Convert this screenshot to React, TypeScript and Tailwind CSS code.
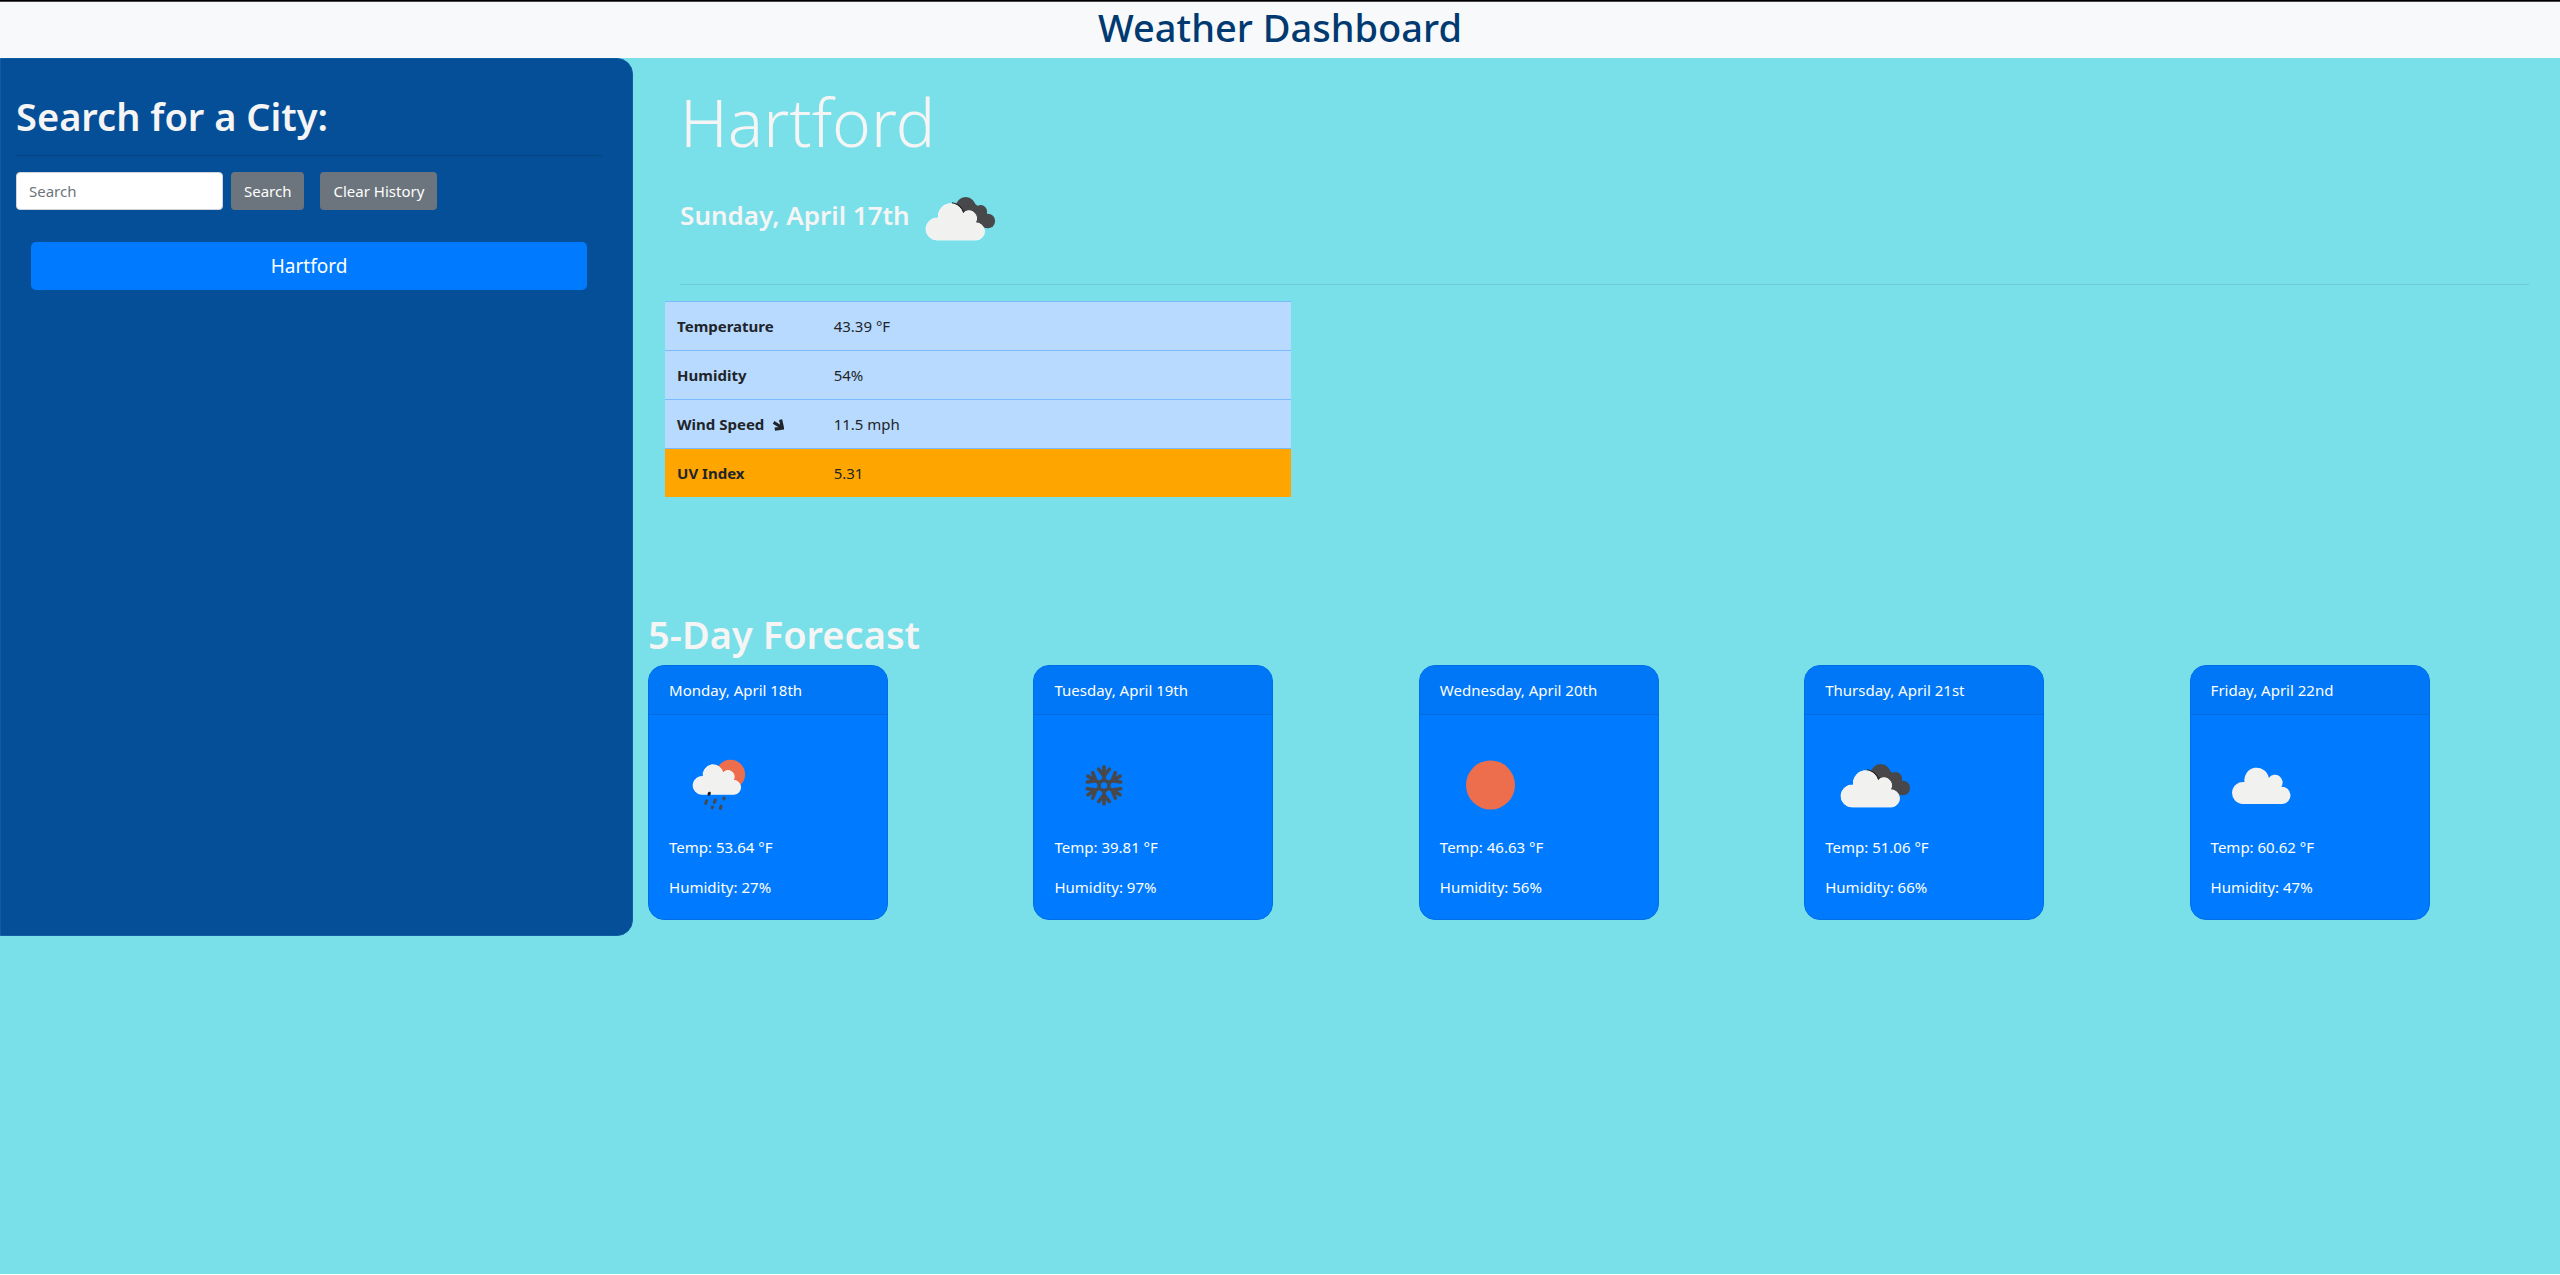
import type { ReactNode } from "react";

type IconKind = "broken" | "rain" | "snow" | "clear" | "few";

const LIGHT = "#f1f1f0";
const DARK = "#48484a";
const SUN = "#ec6e4c";

function CloudShape() {
  return (
    <path d="M32 69A11 11 0 1 1 33.5 47.1A12.3 12.3 0 1 1 57.8 42.9A7.5 7.5 0 0 1 70.2 51.8A8.6 8.6 0 1 1 71.5 69Z" />
  );
}

function WeatherIcon({ kind, label }: { kind: IconKind; label: string }) {
  const drawings: Record<IconKind, ReactNode> = {
    few: (
      <g fill={LIGHT}>
        <CloudShape />
      </g>
    ),
    clear: <circle cx="50.5" cy="50" r="24.5" fill={SUN} />,
    broken: (
      <>
        <g fill={DARK}>
          <circle cx="55.7" cy="39" r="10" />
          <circle cx="70.7" cy="43.5" r="6.4" />
          <circle cx="77.8" cy="53" r="7.3" />
          <path d="M50 40L64 35L77 45L78 60.3L68 58L52 46Z" />
        </g>
        <clipPath id={"dark-" + label}>
          <path d="M47 30H60V52H75V60.5H60V52H47Z" />
        </clipPath>
        <g transform="translate(-5 3)">
          <g
            fill="#252527"
            stroke="#252527"
            strokeWidth="3"
            clipPath={"url(#dark-" + label + ")"}
          >
            <CloudShape />
          </g>
          <g fill="#fff" stroke="#fff" strokeWidth="0.8">
            <CloudShape />
          </g>
          <g fill={LIGHT}>
            <CloudShape />
          </g>
        </g>
      </>
    ),
    rain: (
      <>
        <circle cx="61.5" cy="39.3" r="14.6" fill={SUN} />
        <g transform="translate(6.9 3.1) scale(.815)">
          <g fill="#fff" stroke="#fff" strokeWidth="0.8">
            <CloudShape />
          </g>
          <g fill={LIGHT}>
            <CloudShape />
          </g>
        </g>
        <g stroke={DARK} strokeWidth="3" strokeLinecap="round">
          <path stroke="#1f1f21" d="M40.4 58.2L40 59.3" />
          <path d="M37.5 66L36.7 68.4" />
          <path d="M46.3 65L45.4 67.4" />
          <path d="M55.2 63L54.8 63.9" />
          <path d="M43.5 72L43.2 72.7" />
          <path d="M52.1 71.2L51.3 73.5" />
        </g>
      </>
    ),
    snow: (
      <g
        transform="translate(50 50.4)"
        fill="none"
        stroke={DARK}
        strokeWidth="3.6"
        strokeLinecap="round"
        strokeLinejoin="round"
      >
        <path d="M0 -5.6L4.8 -2.8V2.8L0 5.6L-4.8 2.8V-2.8Z" />
        {[0, 60, 120, 180, 240, 300].map((angle) => (
          <path
            key={angle}
            transform={"rotate(" + angle + ")"}
            d="M0 -5.6V-18.6M-5.4 -16.2L0 -9.4L5.4 -16.2"
          />
        ))}
      </g>
    ),
  };
  return (
    <svg viewBox="0 0 100 100" className="size-25 shrink-0" role="img" aria-label={label}>
      {drawings[kind]}
    </svg>
  );
}

function WindArrow() {
  return (
    <svg viewBox="0 0 12 13" className="ml-2 inline-block h-[13px] w-3 align-[-1px]" aria-hidden="true">
      <path
        d="M1.6 4.4L9 9M8.6 1.6L10.5 10L2.8 11.2"
        fill="none"
        stroke="#212529"
        strokeWidth="3.2"
      />
    </svg>
  );
}

const conditions = [
  { name: "Temperature", value: "43.39 °F", row: "border-[#7abaff] bg-[#b8daff]" },
  { name: "Humidity", value: "54%", row: "border-[#7abaff] bg-[#b8daff]" },
  { name: "Wind Speed", value: "11.5 mph", row: "border-[#7abaff] bg-[#b8daff]" },
  { name: "UV Index", value: "5.31", row: "border-[#7abaff] bg-[#ffa500]" },
];

const forecast: { day: string; kind: IconKind; label: string; temp: string; humidity: string }[] = [
  { day: "Monday, April 18th", kind: "rain", label: "rain", temp: "53.64", humidity: "27" },
  { day: "Tuesday, April 19th", kind: "snow", label: "snow", temp: "39.81", humidity: "97" },
  { day: "Wednesday, April 20th", kind: "clear", label: "clear", temp: "46.63", humidity: "56" },
  { day: "Thursday, April 21st", kind: "broken", label: "cloudy", temp: "51.06", humidity: "66" },
  { day: "Friday, April 22nd", kind: "few", label: "clouds", temp: "60.62", humidity: "47" },
];

function Sidebar() {
  return (
    <aside className="w-[24.73%] shrink-0 rounded-r-2xl border border-[#0f5ca1] bg-[#044f97] pt-8 pr-[30px] pl-[15px]">
      <h2 className="text-[38px] leading-[50px] font-semibold text-[#f5f5f5]">Search for a City:</h2>
      <hr className="mt-3.5 mb-4 border-[#04457f]" />
      <form className="flex" onSubmit={(event) => event.preventDefault()}>
        <input
          type="search"
          aria-label="Search"
          placeholder="Search"
          className="mr-2 h-[38px] w-[207px] rounded border border-[#ced4da] bg-white px-3 text-[#495057] placeholder:text-[#6c757d]"
        />
        <button type="submit" className="mr-4 h-[38px] rounded bg-[#6c757d] px-[13px] text-white">
          Search
        </button>
        <button type="button" className="h-[38px] rounded bg-[#6c757d] px-[13px] text-white">
          Clear History
        </button>
      </form>
      <div className="px-[15px] pt-8">
        <button type="button" className="h-12 w-full rounded-[5px] bg-[#007bff] text-[19px] text-white">
          Hartford
        </button>
      </div>
    </aside>
  );
}

function Current() {
  return (
    <section className="pr-4 pl-8">
      <div className="px-[15px] pt-5 text-[#f5f5f5]">
        <h2 className="mb-1 text-[66px] leading-[86px] font-light">Hartford</h2>
        <div className="flex items-center">
          <h3 className="pb-1.5 text-[26px] leading-8 font-semibold">Sunday, April 17th</h3>
          <WeatherIcon kind="broken" label="overcast" />
        </div>
        <hr className="my-4 border-[#6ecad3]" />
      </div>
      <table className="w-1/3 table-fixed text-left text-[#212529]">
        <tbody>
          {conditions.map(({ name, value, row }) => (
            <tr key={name} className={"h-12 border-t " + row}>
              <th scope="row" className="w-1/4 px-3 py-3 font-bold whitespace-nowrap">
                {name}
                {name === "Wind Speed" && <WindArrow />}
              </th>
              <td className="px-3 py-3">{value}</td>
            </tr>
          ))}
        </tbody>
      </table>
    </section>
  );
}

function Forecast() {
  return (
    <section className="mt-28 pb-4">
      <h2 className="mb-1.5 px-[15px] text-[38px] leading-[50px] font-semibold text-[#f5f5f5]">
        5-Day Forecast
      </h2>
      <div className="grid grid-cols-5">
        {forecast.map(({ day, kind, label, temp, humidity }) => (
          <div key={day} className="px-[15px]">
            <article className="w-60 overflow-hidden rounded-2xl border border-[#006fe6] bg-[#007bff] text-white">
              <h3 className="border-b border-[#006ce0] bg-[#0077f7] px-5 py-3">{day}</h3>
              <div className="p-5">
                <WeatherIcon kind={kind} label={label} />
                <p className="mb-4">Temp: {temp} °F</p>
                <p>Humidity: {humidity}%</p>
              </div>
            </article>
          </div>
        ))}
      </div>
    </section>
  );
}

export default function App() {
  return (
    <div className="min-h-screen border-b border-white bg-[#79dfe9] font-['Noto_Sans',sans-serif] text-[15px] leading-6">
      <header className="border-t border-black bg-[#f8f9fa]">
        <h1 className="border-t border-[#4a4648] pt-px pb-[7px] text-center text-[38px] leading-12 font-medium text-[#003a70]">
          Weather Dashboard
        </h1>
      </header>
      <div className="flex">
        <Sidebar />
        <main className="min-w-0 flex-1">
          <Current />
          <Forecast />
        </main>
      </div>
    </div>
  );
}
